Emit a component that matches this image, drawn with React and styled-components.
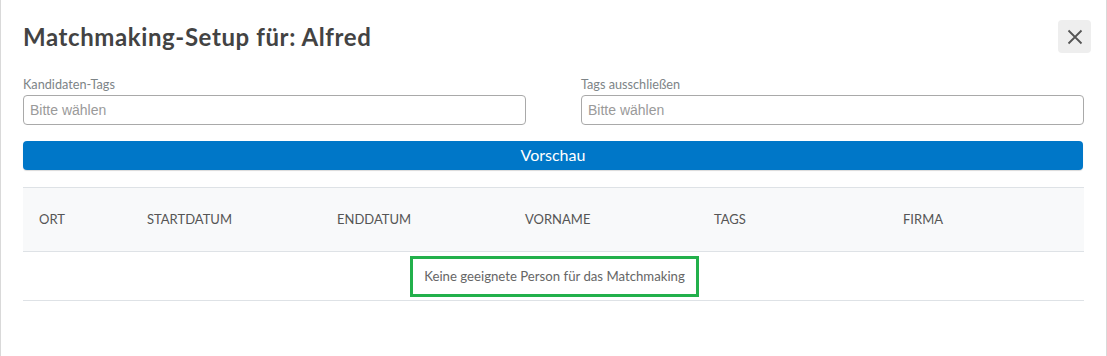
import styled, { createGlobalStyle } from "styled-components";

const GlobalStyle = createGlobalStyle`
    html, body {
        margin: 0;
        padding: 0;
        background: #ffffff;
    }
    * {
        box-sizing: border-box;
    }
`;

const Modal = styled.div`
    width: 1107px;
    height: 356px;
    border-left: 1px solid #d9d9d9;
    border-right: 1px solid #d9d9d9;
    background: #fff;
    padding: 20px 23px 0 22px;
    font-family: Lato, "Open Sans", sans-serif;
`;

const Header = styled.div`
    display: flex;
    justify-content: space-between;
    align-items: flex-start;
    height: 54px;
`;

const Title = styled.h2`
    margin: 2px 0 0;
    font-size: 24px;
    font-weight: 700;
    color: #434343;
    letter-spacing: 0.6px;
`;

const CloseButton = styled.button`
    width: 33px;
    height: 33px;
    margin-right: -8px;
    border: none;
    border-radius: 4px;
    background: #eeeeee;
    display: flex;
    align-items: center;
    justify-content: center;
    padding: 0;
`;

const Fields = styled.div`
    display: grid;
    grid-template-columns: 503px 503px;
    column-gap: 55px;
`;

const Field = styled.label`
    display: flex;
    flex-direction: column;
`;

const Label = styled.span`
    font-size: 12.7px;
    color: #7d8487;
    line-height: 21px;
`;

const Input = styled.input`
    height: 30px;
    border: 1px solid #a9a9a9;
    border-radius: 4px;
    padding: 0 6px;
    font-family: "Liberation Sans", Arial, sans-serif;
    font-size: 14px;
    color: #333;
    outline: none;
    &::placeholder {
        color: #9a9a9a;
    }
`;

const PreviewButton = styled.button`
    display: block;
    width: 100%;
    height: 29px;
    margin-top: 16px;
    border: none;
    border-radius: 4px;
    background: #0077c8;
    color: #fff;
    font-family: Lato, sans-serif;
    font-size: 16px;
    padding: 0 0 3px;
    box-shadow: 0 1px 1px rgba(0, 0, 0, 0.15);
`;

const Table = styled.div`
    margin-top: 17px;
    display: grid;
    grid-template-columns: 108px 190px 188px 189px 189px 197px;
`;

const HeadCell = styled.div`
    height: 65px;
    display: flex;
    align-items: center;
    padding-left: 16px;
    padding-bottom: 2px;
    background: #f8f9fa;
    border-top: 1px solid #dee2e6;
    border-bottom: 1px solid #dee2e6;
    font-size: 13px;
    color: #555;
    text-transform: uppercase;
`;

const EmptyCell = styled.div`
    grid-column: 1 / -1;
    height: 49px;
    display: flex;
    align-items: center;
    justify-content: center;
    border-bottom: 1px solid #dee2e6;
`;

const Highlight = styled.span`
    display: inline-flex;
    align-items: center;
    justify-content: center;
    width: 289px;
    height: 41px;
    margin-left: 2px;
    border: 3px solid #22b04b;
    font-size: 13.2px;
    color: #666;
`;

const columns = ["Ort", "Startdatum", "Enddatum", "Vorname", "Tags", "Firma"];

export default function App() {
    return (
        <>
            <GlobalStyle />
            <Modal>
                <Header>
                    <Title>Matchmaking-Setup für: Alfred</Title>
                    <CloseButton aria-label="Schließen">
                        <svg width="16" height="16" viewBox="0 0 16 16">
                            <path
                                d="M1.5 1.5 L14.5 14.5 M14.5 1.5 L1.5 14.5"
                                stroke="#555"
                                strokeWidth="1.8"
                                fill="none"
                            />
                        </svg>
                    </CloseButton>
                </Header>
                <Fields>
                    <Field>
                        <Label>Kandidaten-Tags</Label>
                        <Input placeholder="Bitte wählen" />
                    </Field>
                    <Field>
                        <Label>Tags ausschließen</Label>
                        <Input placeholder="Bitte wählen" />
                    </Field>
                </Fields>
                <PreviewButton>Vorschau</PreviewButton>
                <Table>
                    {columns.map((c) => (
                        <HeadCell key={c}>{c}</HeadCell>
                    ))}
                    <EmptyCell>
                        <Highlight>Keine geeignete Person für das Matchmaking</Highlight>
                    </EmptyCell>
                </Table>
            </Modal>
        </>
    );
}
